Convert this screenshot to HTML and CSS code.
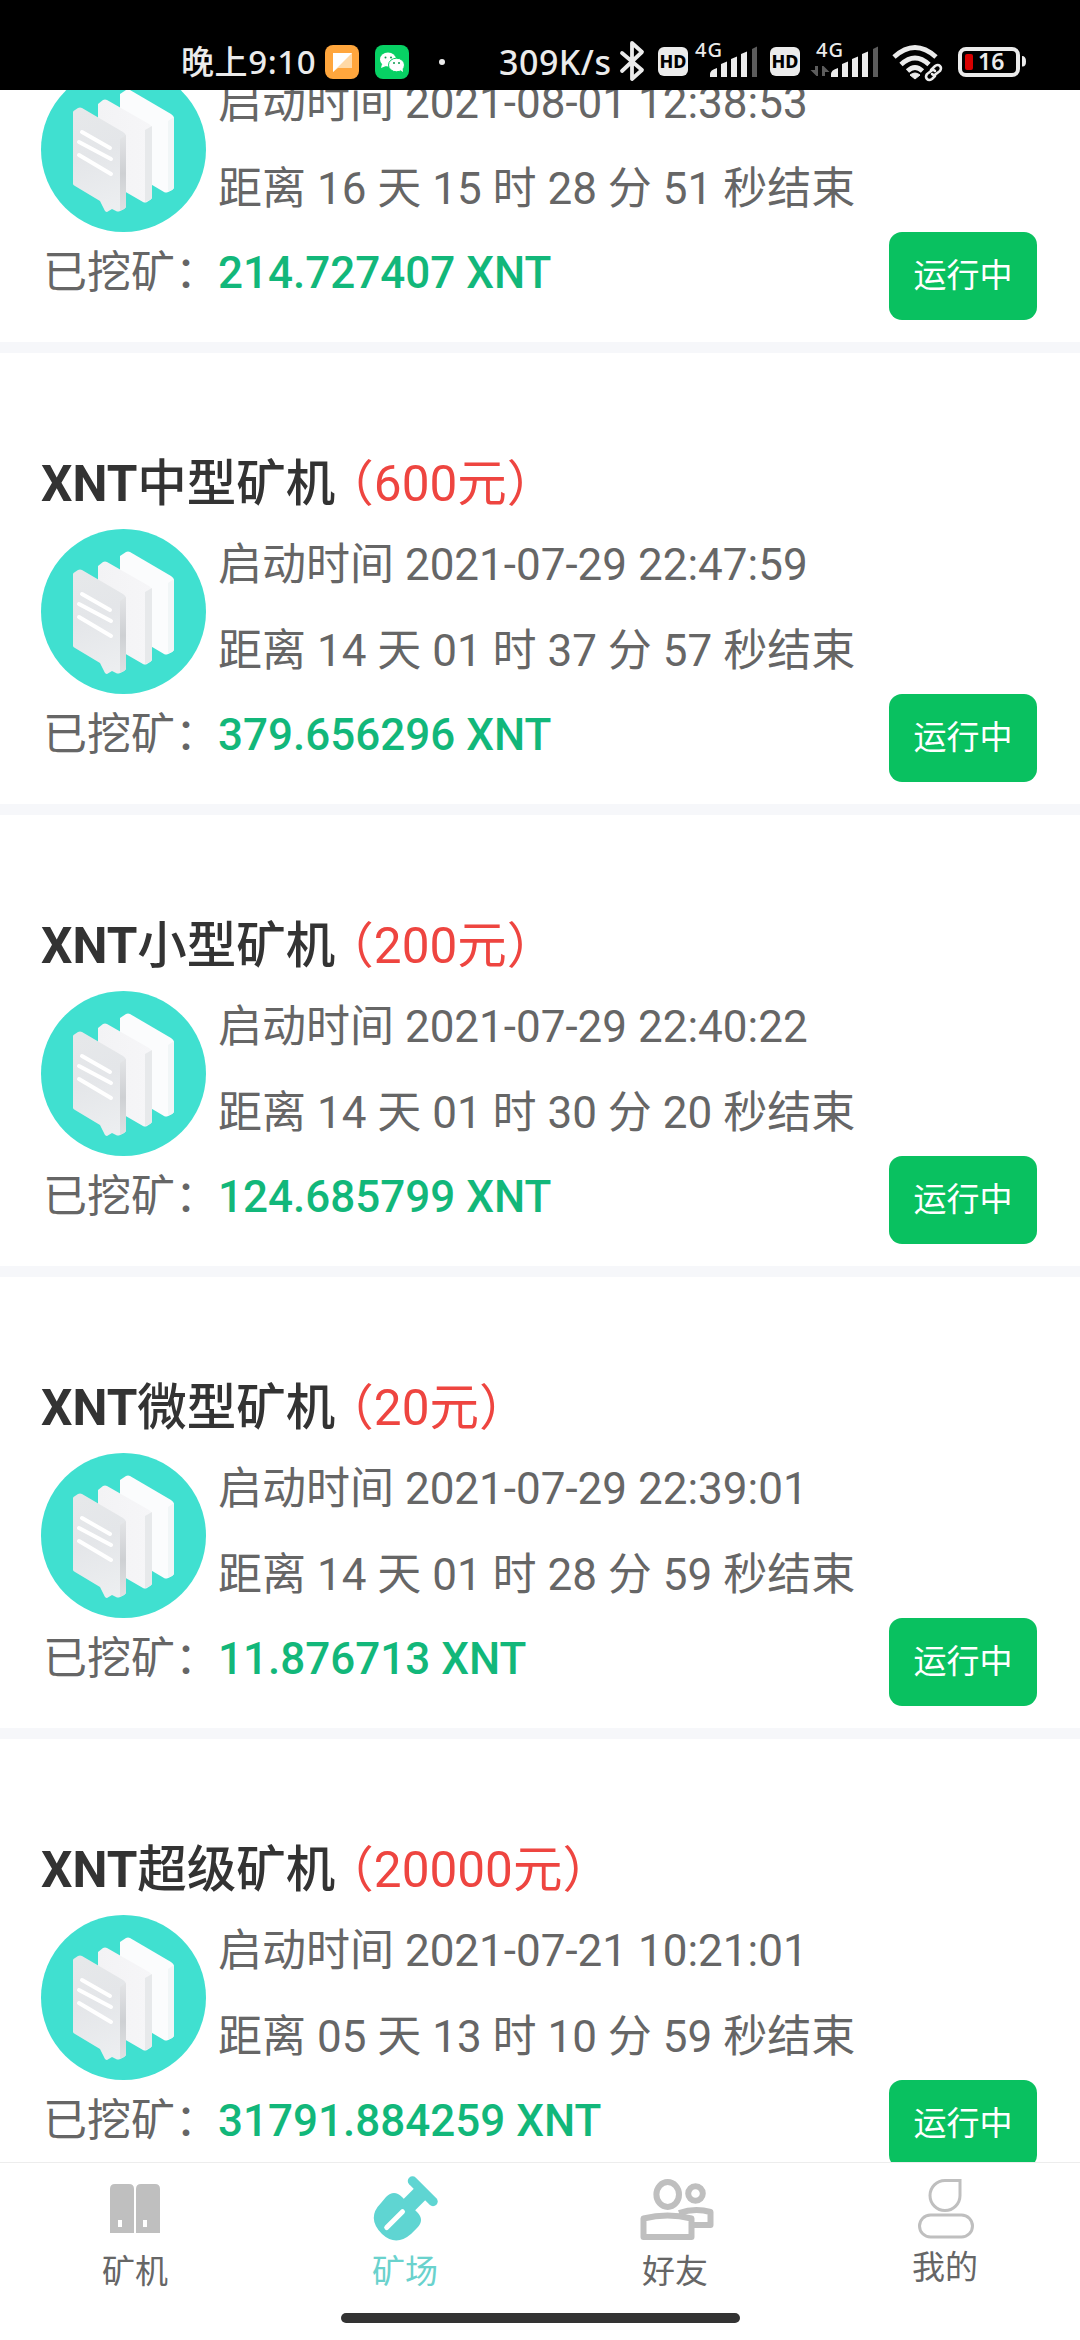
FILE: index.html
```html
<!DOCTYPE html>
<html lang="zh-CN">
<head>
<meta charset="utf-8">
<title>矿场</title>
<link rel="stylesheet" href="styles.css">
</head>
<body>
<svg width="0" height="0" class="defs">
  <defs>
    <linearGradient id="front" x1="0.3" y1="0" x2="0.5" y2="1"><stop offset="0" stop-color="#e6e8ea"/><stop offset="0.45" stop-color="#e4e6e9"/><stop offset="1" stop-color="#eceef0"/></linearGradient>
    <linearGradient id="side" x1="0" y1="0" x2="0" y2="1"><stop offset="0" stop-color="#e3e4e6"/><stop offset="0.5" stop-color="#ced0d3"/><stop offset="1" stop-color="#e0e2e4"/></linearGradient>
    <linearGradient id="mid" x1="0" y1="0" x2="1" y2="0"><stop offset="0" stop-color="#f3f3f5"/><stop offset="1" stop-color="#f6f6f8"/></linearGradient>
    <symbol id="miner" viewBox="0 0 165 165">
      <circle cx="82.500" cy="82.500" r="82.500" fill="#40e0d0"/>
      <path d="M79 27l6-4q2-1 4 0l41 24q3 2 3 4v69q0 2-2 3l-4 2q-2 1-4 0L79 99z" fill="#fbfcfd"/>
      <path d="M127 54l6-4v70q0 2-2 3l-4 2z" fill="#f1f6f7"/>
      <path d="M57 37l5-4q2-1 4 0l42 24q3 2 3 4v69q0 2-2 3l-3 2q-2 1-4 0L57 109z" fill="url(#mid)"/>
      <path d="M104 63l7-4v71q0 2-2 3l-5 2z" fill="#e7e9eb"/>
      <path d="M32 45q0-1 2-2l3-2q2-1 4 0l41 24q3 2 3 4v70q0 2-2 3l-4 2q-2 1-4 0l-4-2-5 3q-1 0-2-1l-5-10-25-15q-2-1-2-2z" fill="url(#front)"/>
      <path d="M79 72l6-4v71q0 2-2 3l-4 2z" fill="url(#side)"/>
      <path d="M41 65l28 16M38 75l32 17M38 88l32 19" stroke="#fff" stroke-width="4" stroke-linecap="round"/>
    </symbol>
  </defs>
</svg>
<div class="screen">
  <header class="status">
    <span class="clock">晚上9:10</span>
    <svg class="app-icon" viewBox="0 0 34 34"><rect width="34" height="34" rx="8" fill="#ffa63d"/><path d="M8 8h19v15H13l-5 4z" fill="#ffd9a6"/><path d="M8 8h19L8 27z" fill="#fff"/></svg>
    <svg class="app-icon wechat" viewBox="0 0 34 34"><rect width="34" height="34" rx="8" fill="#07d164"/><ellipse cx="13" cy="14.500" rx="8" ry="7" fill="#fff"/><path d="M7 19l-1 4 5-2z" fill="#fff"/><ellipse cx="21.500" cy="20" rx="8" ry="6.800" fill="#fff" stroke="#07d164" stroke-width="1"/><path d="M25 25l3 2-.5-4z" fill="#fff"/><g fill="#0a9a4d"><circle cx="10.500" cy="12.500" r="1"/><circle cx="16" cy="12.500" r="1"/><circle cx="19" cy="18" r="1"/><circle cx="24" cy="18" r="1"/></g></svg>
    <span class="dot"></span>
    <span class="speed">309K/s</span>
    <svg class="status-icons" viewBox="0 0 410 50" fill="#ebebeb">
      <path d="M3 16l20 17-10 9V6l10 9L3 34" fill="none" stroke="#ebebeb" stroke-width="3.800" stroke-linejoin="round" stroke-linecap="round"/>
      <rect x="39" y="10" width="30" height="29" rx="6"/><text x="54" y="31" class="hd">HD</text>
      <text x="76" y="20" class="net" textLength="27">4G</text>
      <path d="M91 40v-3q0-4 7-6v9zM102 27l6-2.500V40h-6zM112 22l6-2.500V40h-6zM122 17l6-2.500V40h-6z"/><path d="M133 12l5-2.500V40h-5z" fill="#5c5c5c"/>
      <rect x="151" y="10" width="30" height="29" rx="6"/><text x="166" y="31" class="hd">HD</text>
      <text x="197" y="20" class="net" textLength="27">4G</text>
      <path d="M199 29v10h-1.500l-6-6h4.500v-4zM203 39V29h1.500l6 6H206v4z" fill="#5c5c5c"/>
      <path d="M212 40v-3q0-4 7-6v9zM223 27l6-2.500V40h-6zM233 22l6-2.500V40h-6zM243 17l6-2.500V40h-6z"/><path d="M254 12l5-2.500V40h-5z" fill="#5c5c5c"/>
      <g fill="none" stroke="#ebebeb" stroke-width="4.800"><path d="M275 20q21-19 42 0M282 27.500q14-13 28 0M288.500 34q7.500-7 15 0"/></g><path d="M291 38q5-4 10 0l-5 4z" stroke="#ebebeb"/>
      <g fill="none" stroke="#000" stroke-width="7"><path d="M313 33l3-3q3-2 5 0t0 5l-5 4"/></g>
      <g fill="none" stroke="#ebebeb" stroke-width="2.500" stroke-linecap="round"><path d="M312 33l4-4q3-2 5 0t0 5l-4 3q-2 2-4 0"/><path d="M316 34q-2-2-4 0l-4 3q-2 3 0 5t5 0l3-3"/></g>
      <rect x="341" y="12" width="58" height="26" rx="6" fill="none" stroke="#ebebeb" stroke-width="4"/><rect x="346" y="17" width="8" height="16" rx="2" fill="#d80000"/><path d="M403 19q4 0 4 5.500t-4 5z"/>
      <text x="359" y="33" class="pct">16</text>
    </svg>
  </header>

  <main class="list">
    <section class="card scrolled">
      <div class="info"><svg class="miner"><use href="#miner"/></svg><div class="times"><p>启动时间 2021-08-01 12:38:53</p><p>距离 16 天 15 时 28 分 51 秒结束</p></div></div>
      <div class="mined"><span class="label">已挖矿：</span><span class="amount">214.727407 XNT</span><button class="run">运行中</button></div>
    </section>
    <section class="card">
      <h2 class="title"><b>XNT</b>中型矿机<span class="price">（600元）</span></h2>
      <div class="info"><svg class="miner"><use href="#miner"/></svg><div class="times"><p>启动时间 2021-07-29 22:47:59</p><p>距离 14 天 01 时 37 分 57 秒结束</p></div></div>
      <div class="mined"><span class="label">已挖矿：</span><span class="amount">379.656296 XNT</span><button class="run">运行中</button></div>
    </section>
    <section class="card">
      <h2 class="title"><b>XNT</b>小型矿机<span class="price">（200元）</span></h2>
      <div class="info"><svg class="miner"><use href="#miner"/></svg><div class="times"><p>启动时间 2021-07-29 22:40:22</p><p>距离 14 天 01 时 30 分 20 秒结束</p></div></div>
      <div class="mined"><span class="label">已挖矿：</span><span class="amount">124.685799 XNT</span><button class="run">运行中</button></div>
    </section>
    <section class="card">
      <h2 class="title"><b>XNT</b>微型矿机<span class="price">（20元）</span></h2>
      <div class="info"><svg class="miner"><use href="#miner"/></svg><div class="times"><p>启动时间 2021-07-29 22:39:01</p><p>距离 14 天 01 时 28 分 59 秒结束</p></div></div>
      <div class="mined"><span class="label">已挖矿：</span><span class="amount">11.876713 XNT</span><button class="run">运行中</button></div>
    </section>
    <section class="card">
      <h2 class="title"><b>XNT</b>超级矿机<span class="price">（20000元）</span></h2>
      <div class="info"><svg class="miner"><use href="#miner"/></svg><div class="times"><p>启动时间 2021-07-21 10:21:01</p><p>距离 05 天 13 时 10 分 59 秒结束</p></div></div>
      <div class="mined"><span class="label">已挖矿：</span><span class="amount">31791.884259 XNT</span><button class="run">运行中</button></div>
    </section>
  </main>

  <footer class="bottom">
    <nav class="tabs">
      <a class="tab"><svg viewBox="0 0 80 66"><path d="M15 53V9q0-5 5-5h14q5 0 5 5v44zM41 53V9q0-5 5-5h14q5 0 5 5v44z" fill="#bfbfbf"/><path d="M23 40h4v7h-4zM48 40h4v7h-4z" fill="#fff"/></svg><span>矿机</span></a>
      <a class="tab active"><svg viewBox="0 0 80 66" fill="none"><path d="M47.500 1L68 21.500" stroke="#5fd5d2" stroke-width="9.500" stroke-linecap="round"/><path d="M59 10L38 31" stroke="#5fd5d2" stroke-width="16"/><path d="M16 23L21 17Q29 9 37 17L52 32Q60 40 52 48L46 54Q31 67 17 54Q1 38 16 23z" fill="#5fd5d2"/><path d="M21.700 47.500L37.500 31.700" stroke="#fff" stroke-width="5" stroke-linecap="round"/></svg><span>矿场</span></a>
      <a class="tab"><svg viewBox="0 0 80 66" fill="none" stroke="#bfbfbf" stroke-width="6" stroke-linejoin="round"><ellipse cx="32.700" cy="14.500" rx="11.300" ry="12.500"/><circle cx="60.500" cy="13.500" r="7.300"/><path d="M8.500 38.500q24-6 48 0v18.500h-48zM44 33Q60 27.500 75.500 32V45H59"/></svg><span>好友</span></a>
      <a class="tab me"><svg viewBox="0 0 80 66" fill="none" stroke="#bfbfbf" stroke-width="3"><path d="M55 0.500H40a15 15 0 1 0 15 15z"/><rect x="14.500" y="35" width="53" height="22" rx="11"/></svg><span>我的</span></a>
    </nav>
    <div class="home"></div>
  </footer>
</div>
</body>
</html>
```
FILE: styles.css
```css
* { box-sizing: border-box; margin: 0; padding: 0; }
body { background: #fff; font-family: Roboto, "Noto Sans CJK SC", sans-serif; color: #666; }
.defs { display: block; position: absolute; }
.screen { width: 1080px; height: 2340px; display: flex; flex-direction: column; overflow: hidden; }

.status { flex: none; height: 90px; background: #000; color: #ebebeb; display: flex; align-items: center; padding: 34px 0 0 181px; position: relative; z-index: 1; font: 500 33px/50px "Noto Sans", "Noto Sans CJK SC", sans-serif; }
.clock { width: 144px; white-space: nowrap; letter-spacing: 0.600px; }
.app-icon { width: 34px; height: 34px; }
.wechat { margin-left: 16px; }
.dot { width: 6px; height: 6px; border-radius: 50%; background: #ebebeb; margin-left: 30px; }
.speed { margin-left: 54px; width: 120px; white-space: nowrap; font-size: 34px; letter-spacing: 0.500px; }
.status-icons { width: 410px; height: 50px; }
.hd { font: 800 18px "Noto Sans", sans-serif; fill: #000; text-anchor: middle; }
.net { font: 500 20px "Noto Sans", sans-serif; }
.pct { font: 600 23px "Noto Sans", sans-serif; }

.list { flex: 1; min-height: 0; overflow: hidden; display: flex; flex-direction: column; justify-content: flex-start; }
.card { flex: none; height: 462px; padding: 96px 43px 0 41px; border-bottom: 11px solid #f6f7fa; }
.scrolled { height: 263px; padding-top: 0; }
.scrolled .info { margin-top: -23px; }
.title { height: 80px; line-height: 71px; font-size: 49.500px; font-weight: 500; color: #333; white-space: nowrap; }
.title b { font-weight: 700; }
.price { font-weight: 400; color: #ee4540; margin-left: -11px; }
.info { display: flex; height: 165px; gap: 12px; }
.miner { width: 165px; height: 165px; }
.times p { height: 86px; line-height: 73px; font-size: 44px; white-space: nowrap; }
.mined { display: flex; height: 88px; font-size: 44px; line-height: 83px; white-space: nowrap; }
.label { width: 177px; padding-left: 2px; }
.amount { color: #12b77a; font-weight: 500; }
.run { margin-left: auto; width: 148px; height: 88px; border: 0; border-radius: 13px; background: #09c160; color: #fff; font: 400 33px/88px Roboto, "Noto Sans CJK SC", sans-serif; }

.bottom { flex: none; height: 178px; border-top: 1px solid #ededed; background: #fff; display: flex; flex-direction: column; align-items: center; }
.tabs { width: 100%; display: grid; grid-template-columns: repeat(4, 1fr); height: 150px; padding-top: 17px; }
.tab { display: flex; flex-direction: column; align-items: center; font-size: 33px; line-height: 48px; }
.tab svg { width: 80px; height: 66px; overflow: visible; }
.tab span { margin-top: 2px; }
.me span { margin-top: -2px; }
.active { color: #6ad2cd; }
.home { width: 399px; height: 10px; border-radius: 5px; background: #333; }
```
